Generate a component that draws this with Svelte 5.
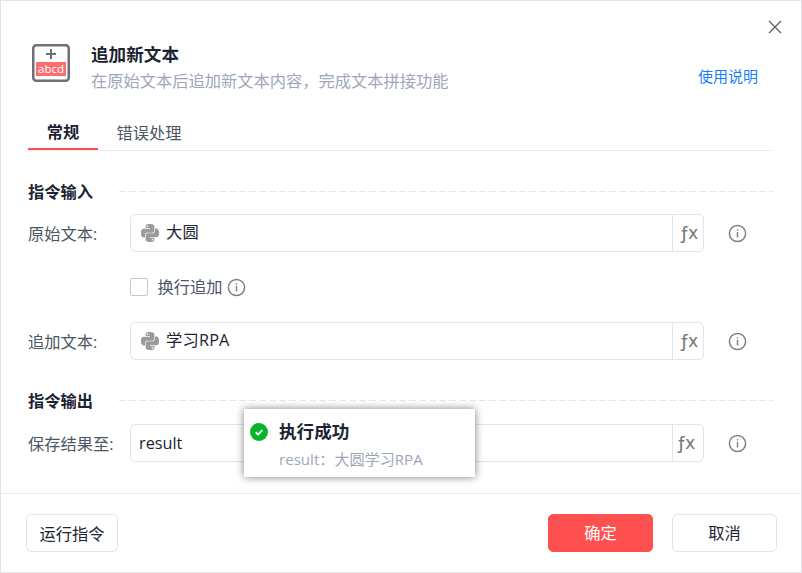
<script>
    let activeTab = $state('general');
    let wrapAppend = $state(false);

    const tabs = [
        { id: 'general', label: '常规' },
        { id: 'error', label: '错误处理' },
    ];
</script>

{#snippet infoIcon()}
    <svg class="info" viewBox="0 0 19 19">
        <circle cx="9.5" cy="9.5" r="8.1" />
        <path d="M9.5 7.9v5.6" />
        <path d="M9.5 5.2v1.3" />
    </svg>
{/snippet}

{#snippet pythonIcon()}
    <svg class="python" viewBox="0 0 24 24">
        <path d="M14.25.18l.9.2.73.26.59.3.45.32.34.34.25.34.16.33.1.3.04.26.02.2-.01.13V8.5l-.05.63-.13.55-.21.46-.26.38-.3.31-.33.25-.35.19-.35.14-.33.1-.3.07-.26.04-.21.02H8.77l-.69.05-.59.14-.5.22-.41.27-.33.32-.27.35-.2.36-.15.37-.1.35-.07.32-.04.27-.02.21v3.06H3.17l-.21-.03-.28-.07-.32-.12-.35-.18-.36-.26-.36-.36-.35-.46-.32-.59-.28-.73-.21-.88-.14-1.05-.05-1.23.06-1.22.16-1.04.24-.87.32-.71.36-.57.4-.44.42-.33.42-.24.4-.16.36-.1.32-.05.24-.01h.16l.06.01h8.16v-.83H6.18l-.01-2.75-.02-.37.05-.34.11-.31.17-.28.25-.26.31-.23.38-.2.44-.18.51-.15.58-.12.64-.1.71-.06.77-.04.84-.02 1.27.05zm-6.3 1.98l-.23.33-.08.41.08.41.23.34.33.22.41.09.41-.09.33-.22.23-.34.08-.41-.08-.41-.23-.33-.33-.22-.41-.09-.41.09zm13.09 3.95l.28.06.32.12.35.18.36.27.36.35.35.47.32.59.28.73.21.88.14 1.04.05 1.23-.06 1.23-.16 1.04-.24.86-.32.71-.36.57-.4.45-.42.33-.42.24-.4.16-.36.09-.32.05-.24.02-.16-.01h-8.22v.82h5.84l.01 2.76.02.36-.05.34-.11.31-.17.29-.25.25-.31.24-.38.2-.44.17-.51.15-.58.13-.64.09-.71.07-.77.04-.84.01-1.27-.04-1.07-.14-.9-.2-.73-.25-.59-.3-.45-.33-.34-.34-.25-.34-.16-.33-.1-.3-.04-.25-.02-.2.01-.13v-5.34l.05-.64.13-.54.21-.46.26-.38.3-.32.33-.24.35-.2.35-.14.33-.1.3-.06.26-.04.21-.02.13-.01h5.84l.69-.05.59-.14.5-.21.41-.28.33-.32.27-.35.2-.36.15-.36.1-.35.07-.32.04-.28.02-.21V6.07h2.09l.14.01zm-6.47 14.25l-.23.33-.08.41.08.41.23.33.33.23.41.08.41-.08.33-.23.23-.33.08-.41-.08-.41-.23-.33-.33-.23-.41-.08-.41.08z" />
    </svg>
{/snippet}

{#snippet field(label, value, python)}
    <div class="row">
        <span class="label">{label}</span>
        <div class="field">
            <div class="value" class:with-icon={python}>
                {#if python}{@render pythonIcon()}{/if}
                <span>{value}</span>
            </div>
            <button class="fx" class:shifted={!python}>ƒx</button>
        </div>
        {@render infoIcon()}
    </div>
{/snippet}

<div class="dialog">
    <header>
        <svg class="logo" viewBox="0 0 38 38">
            <rect class="frame" x="1.25" y="1.25" width="35.5" height="35.5" rx="3" />
            <path class="plus" d="M19 5v10M14 10h10" />
            <rect class="band" x="4" y="18" width="30" height="14" />
            <text x="19" y="29.2" text-anchor="middle" textLength="26">abcd</text>
        </svg>
        <div class="heading">
            <h1>追加新文本</h1>
            <p>在原始文本后追加新文本内容，完成文本拼接功能</p>
        </div>
        <a class="help" href="#help">使用说明</a>
        <button class="close" aria-label="关闭">
            <svg viewBox="0 0 12 12"><path d="M0 0l12 12M12 0L0 12" /></svg>
        </button>
    </header>

    <nav>
        {#each tabs as tab}
            <button class:active={activeTab === tab.id} onclick={() => (activeTab = tab.id)}>{tab.label}</button>
        {/each}
    </nav>

    <main>
        <div class="section"><h2>指令输入</h2><span class="dash"></span></div>
        {@render field('原始文本:', '大圆', true)}
        <label class="check">
            <input type="checkbox" bind:checked={wrapAppend} />
            <span>换行追加</span>
            {@render infoIcon()}
        </label>
        {@render field('追加文本:', '学习RPA', true)}
        <div class="section output"><h2>指令输出</h2><span class="dash"></span></div>
        {@render field('保存结果至:', 'result', false)}
    </main>

    <footer>
        <button class="btn run">运行指令</button>
        <button class="btn primary">确定</button>
        <button class="btn">取消</button>
    </footer>

    <div class="toast">
        <svg class="ok" viewBox="0 0 18 18">
            <circle cx="9" cy="9" r="9" />
            <path d="M5.6 9.2l2.5 2.4 4.2-4.6" />
        </svg>
        <div>
            <strong>执行成功</strong>
            <p>result：大圆学习RPA</p>
        </div>
    </div>
</div>

<style>
    .dialog {
        position: relative;
        box-sizing: border-box;
        width: 802px;
        height: 573px;
        display: flex;
        flex-direction: column;
        border: 1px solid #e3e3e8;
        background: #fff;
        color: #1c2433;
        font-family: "Open Sans", "Noto Sans CJK SC", sans-serif;
        font-size: 16.25px;
        line-height: 24px;
    }

    h1, h2, p {
        margin: 0;
    }

    button {
        padding: 0;
        border: none;
        background: none;
        color: inherit;
        font: inherit;
    }

    svg {
        display: block;
        flex: none;
    }

    /* Cabecera */
    header {
        display: flex;
        height: 114px;
        padding-left: 31px;
    }

    .logo {
        width: 38px;
        height: 38px;
        margin-top: 43px;
    }

    .logo .frame {
        fill: #fff;
        stroke: #706e79;
        stroke-width: 2.5;
    }

    .logo .plus {
        stroke: #706e79;
        stroke-width: 2;
    }

    .logo .band {
        fill: #f9706f;
    }

    .logo text {
        fill: #fff;
        font-size: 11.5px;
    }

    .heading {
        width: 628px;
        padding: 40px 0 0 21px;
        box-sizing: border-box;
    }

    h1 {
        font-size: 17.6px;
        line-height: 26px;
        font-weight: 700;
    }

    .heading p {
        color: #9ea7b8;
        line-height: 28px;
    }

    .help {
        margin-top: 63px;
        color: #1680fb;
        font-size: 15px;
        text-decoration: none;
    }

    .close {
        width: 12px;
        height: 12px;
        margin: 20px 0 0 11px;
    }

    .close svg {
        width: 12px;
        height: 12px;
        overflow: visible;
        stroke: #606266;
        stroke-width: 1.4;
    }

    /* Pestañas */
    nav {
        display: flex;
        gap: 18.5px;
        box-sizing: border-box;
        height: 36px;
        margin: 0 28px 0 27px;
        border-bottom: 1px solid #ebebf2;
    }

    nav button {
        height: 35px;
        color: #4d5665;
    }

    nav .active {
        box-sizing: border-box;
        width: 70px;
        border-bottom: 2px solid #ff4f4f;
        color: #1c2433;
        font-weight: 700;
    }

    /* Formulario */
    main {
        height: 342px;
        margin: 0 28px 0 27px;
    }

    .section {
        display: flex;
        align-items: center;
        gap: 26px;
        padding: 29px 0 10px;
    }

    .output {
        padding: 29px 0 11px;
    }

    h2 {
        width: 65px;
        font-size: 16.25px;
        line-height: 24px;
        white-space: nowrap;
    }

    .dash {
        flex: 1;
        height: 1px;
        margin-bottom: 2px;
        background: repeating-linear-gradient(to right, #e6e7ec 0 7px, transparent 7px 10px);
    }

    .row {
        display: flex;
        align-items: center;
        height: 38px;
    }

    .label {
        width: 102px;
        padding-top: 1px;
        color: #4d5665;
        white-space: nowrap;
    }

    .field {
        display: flex;
        box-sizing: border-box;
        width: 574px;
        height: 38px;
        margin-right: 24px;
        border: 1px solid #e3e4eb;
        border-radius: 5px;
    }

    .value {
        display: flex;
        flex: 1;
        align-items: center;
        gap: 7px;
        padding-left: 8px;
    }

    .with-icon {
        padding-left: 10px;
    }

    .with-icon span {
        padding-bottom: 2px;
        letter-spacing: 0.2px;
    }

    .python {
        width: 18px;
        height: 18px;
        fill: #9b9b9b;
    }

    .fx {
        width: 31px;
        padding-bottom: 2px;
        border-left: 1px solid #e3e4eb;
        color: #777;
        font-size: 18px;
        letter-spacing: -0.8px;
        -webkit-text-stroke: 0.2px #777;
    }

    .shifted {
        padding-right: 6px;
    }

    .info {
        width: 19px;
        height: 19px;
        fill: none;
        stroke: #7b8089;
        stroke-width: 1.5;
    }

    .check {
        display: flex;
        align-items: center;
        height: 70px;
        padding-left: 102px;
        color: #4d5665;
    }

    .check input {
        appearance: none;
        box-sizing: border-box;
        width: 18px;
        height: 18px;
        margin: 0 9.5px 0 0;
        border: 1px solid #c5c8cf;
        border-radius: 2px;
    }

    .check .info {
        margin-left: 4px;
    }

    /* Pie */
    footer {
        display: flex;
        align-items: flex-start;
        gap: 19px;
        flex: 1;
        padding: 20px 24px 0 25px;
        border-top: 1px solid #ebebee;
    }

    .btn {
        box-sizing: border-box;
        width: 105px;
        height: 38px;
        border: 1px solid #e3e4eb;
        border-radius: 5px;
    }

    .run {
        width: 92px;
        margin-right: auto;
        padding-top: 1px;
    }

    .primary {
        border-color: #ff5050;
        background: #ff5050;
        color: #fff;
    }

    /* Aviso superpuesto */
    .toast {
        position: absolute;
        top: 408px;
        left: 243px;
        display: flex;
        gap: 11px;
        box-sizing: border-box;
        width: 231px;
        height: 68px;
        padding: 9px 6px;
        background: #fff;
        box-shadow: 0 0 8px rgba(0, 0, 0, 0.5);
    }

    .ok {
        width: 18px;
        height: 18px;
        margin-top: 5px;
        fill: #07b42c;
    }

    .ok path {
        fill: none;
        stroke: #fff;
        stroke-width: 1.8;
    }

    .toast strong {
        display: block;
        font-size: 17.6px;
        line-height: 26px;
    }

    .toast p {
        color: #9ea7b8;
        font-size: 15.1px;
        line-height: 30px;
    }
</style>
